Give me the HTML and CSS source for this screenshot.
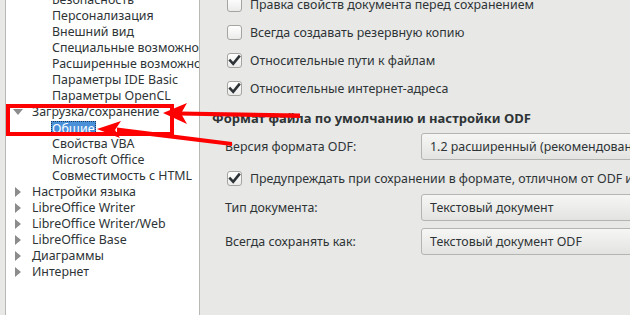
FILE: index.html
```html
<!DOCTYPE html>
<html lang="ru">
<head>
<meta charset="utf-8">
<link rel="stylesheet" href="styles.css">
</head>
<body>
<div class="tree">
  <ul class="list">
    <li class="row l2">Безопасность</li>
    <li class="row l2">Персонализация</li>
    <li class="row l2">Внешний вид</li>
    <li class="row l2">Специальные возможности</li>
    <li class="row l2">Расширенные возможности</li>
    <li class="row l2">Параметры IDE Basic</li>
    <li class="row l2">Параметры OpenCL</li>
    <li class="row l1"><span class="exp down"></span>Загрузка/сохранение</li>
    <li class="row l2"><span class="sel">Общие</span></li>
    <li class="row l2">Свойства VBA</li>
    <li class="row l2">Microsoft Office</li>
    <li class="row l2">Совместимость с HTML</li>
    <li class="row l1"><span class="exp right"></span>Настройки языка</li>
    <li class="row l1"><span class="exp right"></span>LibreOffice Writer</li>
    <li class="row l1"><span class="exp right"></span>LibreOffice Writer/Web</li>
    <li class="row l1"><span class="exp right"></span>LibreOffice Base</li>
    <li class="row l1"><span class="exp right"></span>Диаграммы</li>
    <li class="row l1"><span class="exp right"></span>Интернет</li>
  </ul>
</div>
<div class="main">
  <div class="opts">
    <div class="opt"><span class="cb"></span>Правка свойств документа перед сохранением</div>
    <div class="opt"><span class="cb"></span>Всегда создавать резервную копию</div>
    <div class="opt"><span class="cb on"><svg viewBox="0 0 15 15"><path d="M3.2 7.6 L6.2 10.8 L12 3.6" /></svg></span>Относительные пути к файлам</div>
    <div class="opt"><span class="cb on"><svg viewBox="0 0 15 15"><path d="M3.2 7.6 L6.2 10.8 L12 3.6" /></svg></span>Относительные интернет-адреса</div>
  </div>
  <div class="heading">Формат файла по умолчанию и настройки ODF</div>
  <div class="field">
    <span class="label">Версия формата ODF:</span>
    <span class="combo">1.2 расширенный (рекомендованный)</span>
  </div>
  <div class="opt warn"><span class="cb on"><svg viewBox="0 0 15 15"><path d="M3.2 7.6 L6.2 10.8 L12 3.6" /></svg></span>Предупреждать при сохранении в формате, отличном от ODF или по умолчанию</div>
  <div class="field">
    <span class="label">Тип документа:</span>
    <span class="combo">Текстовый документ</span>
  </div>
  <div class="field second">
    <span class="label">Всегда сохранять как:</span>
    <span class="combo">Текстовый документ ODF</span>
  </div>
</div>
<svg class="marks" viewBox="0 0 630 315" width="630" height="315">
  <rect x="8" y="106" width="164" height="28" fill="none" stroke="#ff0000" stroke-width="4"/>
  <polygon points="300,113.5 300,118 180,115.5 180,111.5" fill="#ff0000"/>
  <polygon points="163,113 187,103 181,113.5 187,124" fill="#ff0000"/>
  <polygon points="117,127.5 117,132 232,146 232,142" fill="#ff0000"/>
  <polygon points="97,129 121,121 115,130 120,138" fill="#ff0000"/>
</svg>
</body>
</html>
```
FILE: styles.css
```css
* { box-sizing: border-box; }
html, body { margin: 0; padding: 0; }
body {
  width: 630px;
  height: 315px;
  overflow: hidden;
  background: #e8e8e7;
  display: flex;
  font-family: "Noto Sans", "Open Sans", sans-serif;
  font-size: 12.4px;
  color: #2e3436;
  position: relative;
}
.tree {
  margin-left: 5px;
  width: 195px;
  height: 330px;
  flex: none;
  background: #ffffff;
  border-left: 1px solid #b8b8b5;
  border-right: 1px solid #b8b8b5;
  overflow: hidden;
}
.list {
  list-style: none;
  margin: -8px 0 0 0;
  padding: 0;
}
.row {
  height: 16px;
  line-height: 16px;
  white-space: nowrap;
  display: flex;
  align-items: center;
}
.l2 { padding-left: 46px; }
.l1 { padding-left: 7px; }
.exp {
  width: 0; height: 0;
  margin-right: 12px;
  flex: none;
}
.exp.down {
  border-left: 5px solid transparent;
  border-right: 5px solid transparent;
  border-top: 6px solid #8c8c8c;
  margin-right: 9px;
}
.exp.right {
  margin-left: 2px;
  border-top: 5px solid transparent;
  border-bottom: 5px solid transparent;
  border-left: 6px solid #8c8c8c;
  margin-right: 11px;
}
.sel {
  background: #4a90d9;
  color: #ffffff;
  outline: 1px dotted #1d3c60;
  outline-offset: -1px;
  padding: 0 2px 0 1px;
  margin-left: -1px;
  line-height: 15px;
}
.main {
  flex: 1;
  padding-left: 12px;
  white-space: nowrap;
}
.opts { margin-top: -10px; padding-left: 15px; }
.opt {
  height: 28px;
  display: flex;
  align-items: center;
}
.cb {
  width: 15px; height: 15px;
  flex: none;
  border: 1px solid #a4a4a1;
  border-radius: 3px;
  background: linear-gradient(#ffffff, #ebebea);
  margin-right: 8px;
  display: flex;
}
.cb svg { width: 15px; height: 15px; margin: -1px; }
.cb path { fill: none; stroke: #2e3436; stroke-width: 2.6; stroke-linecap: square; }
.heading {
  font-weight: bold;
  font-size: 13px;
  line-height: 18px;
  margin-top: 7px;
}
.field {
  display: flex;
  align-items: center;
  height: 27px;
  margin-top: 6px;
  padding-left: 13px;
}
.field.second { margin-top: 7px; }
.label { width: 196px; flex: none; }
.combo {
  flex: none;
  width: 240px;
  height: 27px;
  line-height: 25px;
  padding-left: 8px;
  border: 1px solid #b4b4b1;
  border-radius: 3px;
  background: linear-gradient(#f6f6f5, #e3e3e1);
}
.warn {
  height: 30px;
  margin-top: 3px;
  padding-left: 15px;
}
.warn + .field { margin-top: 1px; }
.marks {
  position: absolute;
  left: 0; top: 0;
  pointer-events: none;
}
```
